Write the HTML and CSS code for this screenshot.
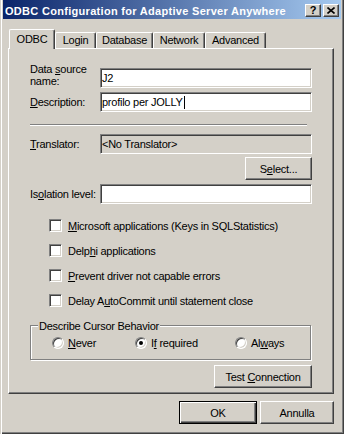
FILE: index.html
```html
<!DOCTYPE html>
<html lang="it">

<head>
  <meta charset="UTF-8">
  <title>ODBC Configuration for Adaptive Server Anywhere</title>
  <link rel="stylesheet" href="styles.css">
</head>

<body>
  <div class="window">

    <!-- title bar -->
    <div class="titlebar">
      <span class="title">ODBC Configuration for Adaptive Server Anywhere</span>
      <div class="caption-buttons">
        <span class="cap-btn cap-help">?</span>
        <span class="cap-btn cap-close">
          <svg width="8" height="7" viewBox="0 0 8 7">
            <path d="M0.5 0.5L7.5 6.5M7.5 0.5L0.5 6.5" stroke="#000" stroke-width="1.6" fill="none" />
          </svg>
        </span>
      </div>
    </div>

    <div class="client">
      <div class="tabs">
        <span class="tab active tab-odbc">ODBC</span>
        <span class="tab tab-login">Login</span>
        <span class="tab tab-database">Database</span>
        <span class="tab tab-network">Network</span>
        <span class="tab tab-advanced">Advanced</span>
      </div>

      <div class="panel">
        <div class="row row-dsn">
          <span class="lbl lbl-two">Data <u>s</u>ource<br>name:</span>
          <div class="edit">J2</div>
        </div>
        <div class="row row-desc">
          <span class="lbl"><u>D</u>escription:</span>
          <div class="edit">profilo per JOLLY<span class="caret"></span></div>
        </div>

        <div class="sep"></div>

        <div class="row row-trans">
          <span class="lbl"><u>T</u>ranslator:</span>
          <div class="edit readonly">&lt;No Translator&gt;</div>
        </div>
        <div class="btn-row btn-row-select">
          <button class="btn btn-select">S<u>e</u>lect...</button>
        </div>
        <div class="row row-iso">
          <span class="lbl">Is<u>o</u>lation level:</span>
          <div class="edit"></div>
        </div>

        <div class="checks">
          <div class="check-row"><span class="check"></span><span><u>M</u>icrosoft applications (Keys in SQLStatistics)</span></div>
          <div class="check-row"><span class="check"></span><span>Delp<u>h</u>i applications</span></div>
          <div class="check-row"><span class="check"></span><span><u>P</u>revent driver not capable errors</span></div>
          <div class="check-row"><span class="check"></span><span>Delay A<u>u</u>toCommit until statement close</span></div>
        </div>

        <div class="group">
          <span class="group-title">Describe Cursor Behavior</span>
          <div class="radio-opt"><span class="radio"></span><span><u>N</u>ever</span></div>
          <div class="radio-opt"><span class="radio checked"></span><span>I<u>f</u> required</span></div>
          <div class="radio-opt"><span class="radio"></span><span>Al<u>w</u>ays</span></div>
        </div>

        <div class="btn-row btn-row-test">
          <button class="btn btn-test">Test <u>C</u>onnection</button>
        </div>
      </div>

      <div class="dlg-buttons">
        <button class="btn btn-ok">OK</button>
        <button class="btn btn-cancel">Annulla</button>
      </div>
    </div>
  </div>
</body>

</html>
```

FILE: styles.css
```css
body {
  margin: 0;
  background: #d4d0c8;
  color: #000;
  font: 11px "Liberation Sans", Arial, sans-serif;
  letter-spacing: -0.25px;
}

u {
  text-decoration: underline;
}

.window {
  width: 344px;
  height: 434px;
  box-sizing: border-box;
  padding: 0 3px 3px;
  background: #d4d0c8;
  box-shadow: inset 1px 0 #d4d0c8, inset 2px 0 #fff, inset -1px -1px #404040, inset -2px -2px #808080;
}

/* title bar */
.titlebar {
  display: flex;
  justify-content: space-between;
  align-items: flex-start;
  height: 19px;
  padding: 0 2px;
  background: linear-gradient(to right, #0a246a, #a6caf0);
}

.title {
  margin-top: 5px;
  color: #fff;
  font-weight: bold;
  line-height: 13px;
  letter-spacing: 0.3px;
}

.caption-buttons {
  display: flex;
  gap: 2px;
  margin-top: 4px;
}

.cap-btn {
  display: flex;
  align-items: center;
  justify-content: center;
  width: 16px;
  height: 13px;
  box-sizing: border-box;
  background: #d4d0c8;
  border: 1px solid;
  border-color: #fff #404040 #404040 #fff;
  box-shadow: inset -1px -1px #808080;
}

.cap-help {
  font-weight: bold;
  font-size: 11px;
  line-height: 11px;
}

/* tabs */
.tabs {
  position: relative;
  z-index: 1;
  display: flex;
  align-items: flex-end;
  height: 20px;
  margin: 10px 0 -1px 6px;
}

.tab {
  height: 16px;
  margin-bottom: 1px;
  box-sizing: border-box;
  border: 1px solid;
  border-color: #fff #404040 transparent #fff;
  border-bottom: none;
  border-radius: 2px 2px 0 0;
  box-shadow: inset -1px 0 #808080;
  background: #d4d0c8;
  text-align: center;
  line-height: 14px;
}

.tab.active {
  height: 20px;
  margin-bottom: 0;
  padding-top: 2px;
}

.tab-odbc { width: 46px; }
.tab-login { width: 41px; }
.tab-database { width: 57px; }
.tab-network { width: 52px; }
.tab-advanced { width: 61px; }

/* tab page */
.panel {
  width: 326px;
  height: 346px;
  box-sizing: border-box;
  margin-left: 5px;
  padding: 0 21px;
  border: 1px solid;
  border-color: #fff #404040 #404040 #fff;
  box-shadow: inset -1px -1px #808080;
}

.row {
  display: flex;
  align-items: center;
}

.lbl {
  flex: none;
  width: 70px;
  line-height: 13px;
  white-space: nowrap;
}

.row-dsn {
  align-items: flex-start;
  margin-top: 19px;
}

.lbl-two {
  margin-top: -5px;
  line-height: 12px;
}

.row-desc {
  margin-top: 4px;
}

.edit {
  width: 212px;
  height: 20px;
  box-sizing: border-box;
  padding: 1px 1px 0;
  background: #fff;
  border: 1px solid;
  border-color: #808080 #fff #fff #808080;
  box-shadow: inset 1px 1px #404040, inset -1px -1px #d4d0c8;
  line-height: 17px;
  white-space: nowrap;
}

.edit.readonly {
  background: #d4d0c8;
}

.caret {
  display: inline-block;
  width: 1px;
  height: 13px;
  margin-left: 1px;
  background: #000;
  vertical-align: -3px;
}

.sep {
  width: 277px;
  height: 2px;
  box-sizing: border-box;
  margin-top: 12px;
  border-top: 1px solid #808080;
  border-bottom: 1px solid #fff;
}

.row-trans {
  margin-top: 8px;
}

.row-iso {
  margin-top: 4px;
}

/* buttons */
.btn-row {
  display: flex;
  justify-content: flex-end;
}

.btn {
  height: 23px;
  box-sizing: border-box;
  padding: 0;
  background: #d4d0c8;
  color: #000;
  font: inherit;
  letter-spacing: inherit;
  border: 1px solid;
  border-color: #fff #404040 #404040 #fff;
  box-shadow: inset -1px -1px #808080;
}

.btn-row-select {
  margin-top: 3px;
}

.btn-select {
  width: 67px;
}

.btn-row-test {
  margin-top: 5px;
}

.btn-test {
  width: 98px;
}

/* check boxes */
.checks {
  display: flex;
  flex-direction: column;
  gap: 12px;
  margin: 15px 0 0 19px;
}

.check-row {
  display: flex;
  align-items: center;
  gap: 6px;
  height: 13px;
  white-space: nowrap;
}

.check {
  flex: none;
  width: 13px;
  height: 13px;
  box-sizing: border-box;
  background: #fff;
  border: 1px solid;
  border-color: #808080 #fff #fff #808080;
  box-shadow: inset 1px 1px #404040, inset -1px -1px #d4d0c8;
}

/* group box */
.group {
  position: relative;
  display: grid;
  grid-template-columns: 83px 100px auto;
  height: 35px;
  box-sizing: border-box;
  margin: 18px 1px 0 0;
  padding: 11px 0 0 21px;
  border: 1px solid #808080;
  box-shadow: inset 1px 1px #fff, 1px 1px #fff;
}

.group-title {
  position: absolute;
  top: -6px;
  left: 7px;
  padding: 0 1px;
  background: #d4d0c8;
  line-height: 13px;
}

.radio-opt {
  display: flex;
  align-items: center;
  gap: 4px;
  height: 12px;
  white-space: nowrap;
}

.radio {
  position: relative;
  flex: none;
  width: 12px;
  height: 12px;
  box-sizing: border-box;
  border-radius: 50%;
  background: #fff;
  border: 1px solid;
  border-color: #808080 #fff #fff #808080;
  box-shadow: inset 1px 1px #404040, inset -1px -1px #d4d0c8;
}

.radio.checked::after {
  content: "";
  position: absolute;
  left: 3px;
  top: 3px;
  width: 4px;
  height: 4px;
  border-radius: 50%;
  background: #000;
}

/* OK / Annulla */
.dlg-buttons {
  display: flex;
  justify-content: flex-end;
  gap: 3px;
  width: 326px;
  margin: 7px 0 0 5px;
}

.btn-ok {
  width: 78px;
  border-color: #000;
  box-shadow: inset 1px 1px #fff, inset -1px -1px #404040, inset -2px -2px #808080;
}

.btn-cancel {
  width: 74px;
}
```
